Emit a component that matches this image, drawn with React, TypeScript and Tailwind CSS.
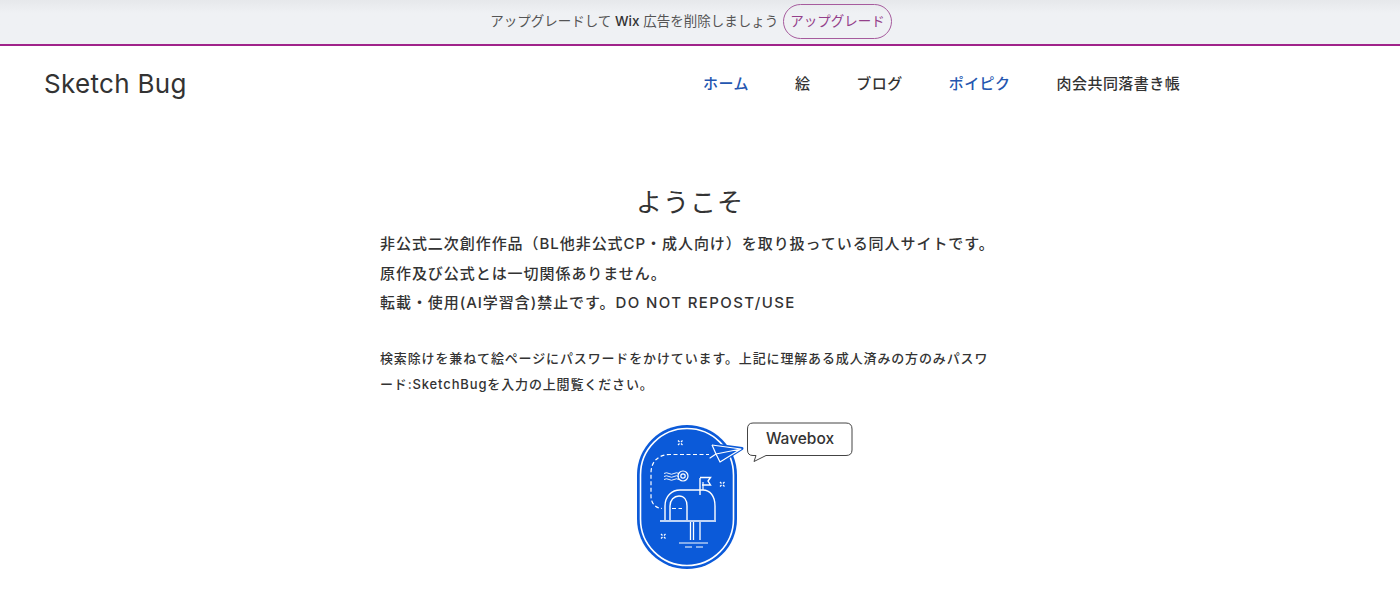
const cjk = "font-['Inter','Noto_Sans_CJK_JP',sans-serif]";

function WaveboxBadge() {
  return (
    <svg width="250" height="170" viewBox="0 0 250 170" fill="none">
      <rect x="17" y="15" width="100" height="144" rx="50" fill="#0b5ad9" />
      <rect x="20.5" y="18.5" width="93" height="137" rx="46.5" stroke="#fff" strokeWidth="1.6" />
      {/* dashed route */}
      <path d="M90 44.5H50C38 44.5 31 52 31 63V86C31 93 35 98 42 98.5M52 98.5H62" stroke="#fff" strokeWidth="1.2" strokeDasharray="4 2.5" />
      {/* plane */}
      <path d="M92 34.5L122 38.5L100 52.5L98 45L90 48L92 34.5Z" fill="#0b5ad9" stroke="#0b5ad9" strokeWidth="3" strokeLinejoin="round" />
      <path d="M92 35L121 39L100 52L96 44L90 48L96 44L121 39" stroke="#fff" strokeWidth="1.2" strokeLinejoin="round" />
      <path d="M92 35L96 44" stroke="#fff" strokeWidth="1.2" />
      {/* waves + stamp */}
      <path d="M44 63.5q2.5-1.5 5 0t5 0t5 0M44 66.5q2.5-1.5 5 0t5 0t5 0M44 69.5q2.5-1.5 5 0t5 0t5 0" stroke="#fff" strokeWidth="0.9" />
      <circle cx="63" cy="66" r="5" stroke="#fff" strokeWidth="1.2" />
      <circle cx="63" cy="66" r="2.2" stroke="#fff" strokeWidth="1.2" />
      {/* mailbox */}
      <path d="M45 110V96C45 86 52 80 60 80H83C90 80 95 86 95 96V110" stroke="#fff" strokeWidth="1.4" />
      <path d="M50 110V96C50 90 54 86 59 86C64 86 67 90 67 96V110" stroke="#fff" strokeWidth="1.4" />
      <path d="M40 111H96" stroke="#fff" strokeWidth="1.6" />
      <path d="M80 85V68M80 67.5H90.5L88 71L90.5 75H82" stroke="#fff" strokeWidth="1.4" />
      <path d="M83 80V72" stroke="#fff" strokeWidth="1.2" />
      {/* post */}
      <path d="M70.5 112V130M73.5 112V130M80 112V130" stroke="#fff" strokeWidth="1.3" />
      <path d="M59 133H88M65 137H72M76 137H83" stroke="#fff" strokeWidth="1" />
      {/* sparks */}
      <path d="M58 30.5l1.5 1.5M62.5 30.5l-1.5 1.5M58 35l1.5-1.5M62.5 35l-1.5-1.5M100 72l1.5 1.5M104.5 72l-1.5 1.5M100 76.5l1.5-1.5M104.5 76.5l-1.5-1.5M41 124l1.5 1.5M45.5 124l-1.5 1.5M41 128.5l1.5-1.5M45.5 128.5l-1.5-1.5" stroke="#fff" strokeWidth="1.2" />
      {/* bubble */}
      <path d="M133 13H226Q232 13 232 19V40Q232 45.5 226 45.5H146L134 51.5L136 45.5H133Q127.5 45.5 127.5 40V19Q127.5 13 133 13Z" fill="#fff" stroke="#444" strokeWidth="1" />
      <text x="180" y="34" textAnchor="middle" fontFamily="Inter, sans-serif" fontSize="15.5" fontWeight="500" fill="#333">Wavebox</text>
    </svg>
  );
}

export default function App() {
  return (
    <div className={`h-[604px] overflow-hidden bg-white text-[#333] ${cjk}`}>
      {/* wix ad bar */}
      <div className="h-[46px] pb-[2px] pr-[18px] border-b-2 border-[#a0238a] bg-gradient-to-b from-[#e6e8eb] to-[#eff1f4] to-30% flex items-center justify-center gap-[5px] text-[13.5px] text-[#555]">
        <span>
          アップグレードして <b className="font-medium text-[#333]">Wix</b> 広告を削除しましょう
        </span>
        <span className="h-[35px] px-[6px] rounded-full border border-[#a65b9d] text-[#94408a] flex items-center">アップグレード</span>
      </div>

      <header className="h-[76px] pl-[44px] flex items-center">
        <div className="w-[659px] text-[26px] leading-[32px] tracking-[0.3px]">Sketch Bug</div>
        <nav className="flex gap-[46px] text-[15px] tracking-[0.45px] font-medium">
          <a className="text-[#2456b0]">ホーム</a>
          <a>絵</a>
          <a>ブログ</a>
          <a className="text-[#2456b0]">ポイピク</a>
          <a>肉会共同落書き帳</a>
        </nav>
      </header>

      <main className="w-[620px] ml-[380px] pt-[62px]">
        <h1 className="text-center text-[26px] leading-[38px] tracking-[1px]">ようこそ</h1>
        <div className="mt-[7px] text-[15px] leading-[29.5px] font-medium tracking-[0.95px]">
          <p>非公式二次創作作品（BL他非公式CP・成人向け）を取り扱っている同人サイトです。</p>
          <p>原作及び公式とは一切関係ありません。</p>
          <p>
            転載・使用(AI学習含)禁止です。<span className="tracking-[1.4px]">DO NOT REPOST/USE</span>
          </p>
        </div>
        <p className="mt-[27px] text-[13px] leading-[26px] font-medium tracking-[0.86px]">
          検索除けを兼ねて絵ページにパスワードをかけています。上記に理解ある成人済みの方のみパスワード:SketchBugを入力の上閲覧ください。
        </p>
        <div className="ml-[240px] mt-[13px]">
          <WaveboxBadge />
        </div>
      </main>
    </div>
  );
}
